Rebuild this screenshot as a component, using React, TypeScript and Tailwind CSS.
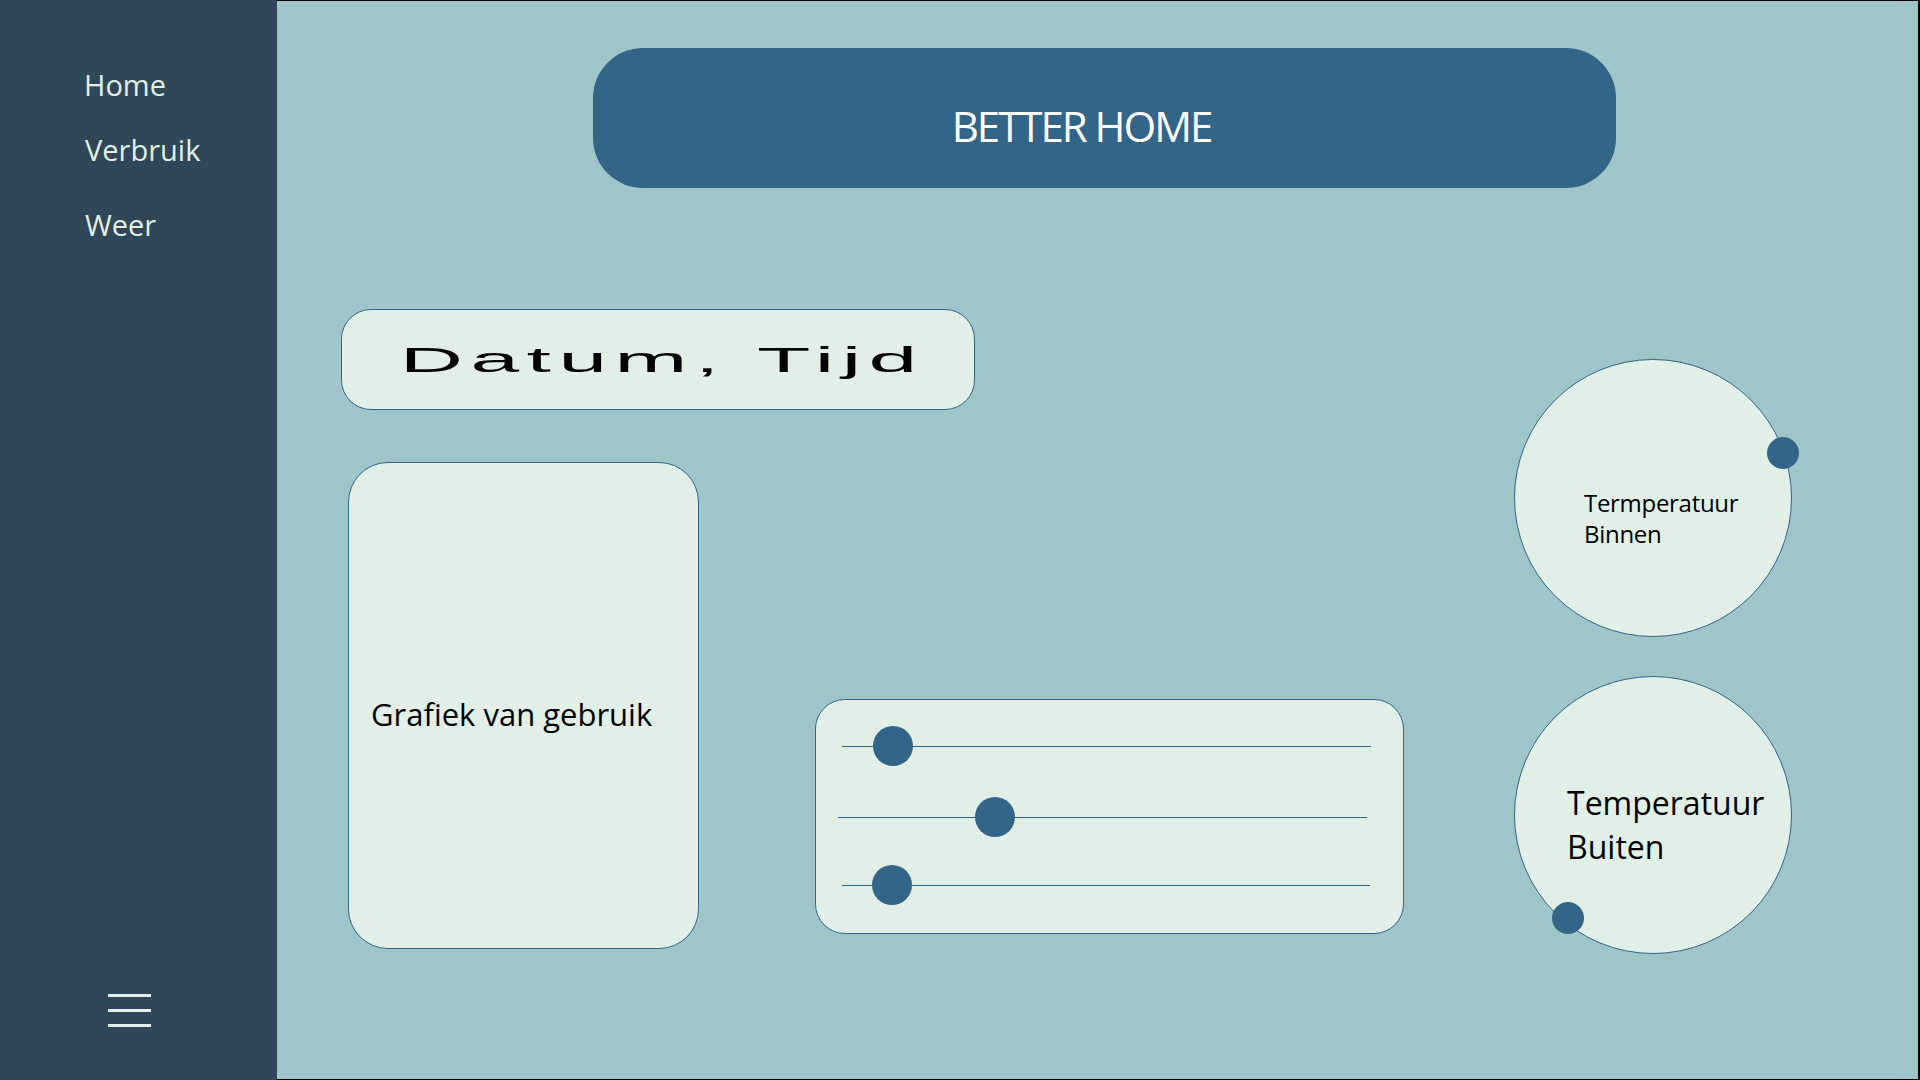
import React from "react";

const sans = "font-['Open_Sans','Noto_Sans',sans-serif]";

function Slider({ lineLeft, lineWidth, knobCenter, mt }: { lineLeft: number; lineWidth: number; knobCenter: number; mt: string }) {
  return (
    <div className={`relative h-[40px] ${mt}`} style={{ marginLeft: lineLeft, width: lineWidth }}>
      <div className="absolute left-0 right-0 top-[19.5px] h-[1.5px] bg-[#336589]" />
      <div
        className="absolute top-0 h-[40px] w-[40px] rounded-full bg-[#336589]"
        style={{ left: knobCenter - lineLeft - 20 }}
      />
    </div>
  );
}

export default function App() {
  return (
    <div className={`flex h-[1080px] w-[1920px] overflow-hidden ${sans}`}>
      {/* Sidebar */}
      <aside className="flex h-full w-[277px] shrink-0 flex-col bg-[#2f4757] text-[#e1efe6]">
        <nav className="flex flex-col pl-[84px] pt-[65px] text-[29px] leading-[40px]">
          <a className="block">Home</a>
          <a className="mt-[25px] block pl-[1px]">Verbruik</a>
          <a className="mt-[35px] block pl-[1px]">Weer</a>
        </nav>
        <div className="mt-auto flex flex-col gap-[12px] pb-[53px] pl-[108px]">
          <span className="block h-[3px] w-[43px] bg-[#e1efe6]" />
          <span className="block h-[3px] w-[43px] bg-[#e1efe6]" />
          <span className="block h-[3px] w-[43px] bg-[#e1efe6]" />
        </div>
      </aside>

      {/* Main */}
      <main className="flex h-full flex-1 flex-col border-t border-r-2 border-b border-black bg-[#9ec6c9]">
        <div className="mt-[47px] pl-[316px]">
          <header className="flex h-[140px] w-[1023px] items-center justify-center rounded-[50px] bg-[#336589] pr-[46px] pt-[15px]">
            <h1 className="text-[42px] leading-[42px] tracking-[-2px] text-white">BETTER HOME</h1>
          </header>
        </div>

        <div className="flex items-start pl-[64px]">
          <div className="flex flex-col mt-[121px]">
            <div className="flex h-[101px] w-[634px] items-center justify-center rounded-[30px] border border-[#336589] bg-[#e1efe6]">
              <span className="inline-block origin-center scale-x-[2.5] pl-[3px] font-['Liberation_Sans',Arial,sans-serif] text-[35px] leading-[40px] tracking-[3px] text-black">
                Datum, Tijd
              </span>
            </div>

            <div className="mt-[52px] flex items-start pl-[7px]">
              <div className="flex h-[487px] w-[351px] flex-col justify-center rounded-[40px] border border-[#336589] bg-[#e1efe6] pl-[22px] pt-[16px]">
                <span className="text-[31px] leading-[40px] text-black">Grafiek van gebruik</span>
              </div>

              <div className="ml-[116px] mt-[237px] flex h-[235px] w-[589px] flex-col rounded-[30px] border border-[#336589] bg-[#e1efe6] pt-[26px]">
                <Slider lineLeft={26} lineWidth={529} knobCenter={77} mt="" />
                <Slider lineLeft={22} lineWidth={529} knobCenter={179} mt="mt-[31px]" />
                <Slider lineLeft={26} lineWidth={528} knobCenter={76} mt="mt-[28px]" />
              </div>
            </div>
          </div>

          <div className="ml-[110px] mt-[171px] flex flex-col gap-[39px]">
            <div className="relative h-[278px] w-[278px] rounded-full border border-[#336589] bg-[#e1efe6] pl-[69px] pt-[127px]">
              <p className="text-[24px] leading-[31px] tracking-[-0.3px] text-black">
                Termperatuur
                <br />
                Binnen
              </p>
              <span className="absolute left-[252px] top-[77px] h-[32px] w-[32px] rounded-full bg-[#336589]" />
            </div>
            <div className="relative h-[278px] w-[278px] rounded-full border border-[#336589] bg-[#e1efe6] pl-[52px] pt-[104px]">
              <p className="text-[32px] leading-[44px] text-black">
                Temperatuur
                <br />
                Buiten
              </p>
              <span className="absolute left-[37px] top-[225px] h-[32px] w-[32px] rounded-full bg-[#336589]" />
            </div>
          </div>
        </div>
      </main>
    </div>
  );
}
